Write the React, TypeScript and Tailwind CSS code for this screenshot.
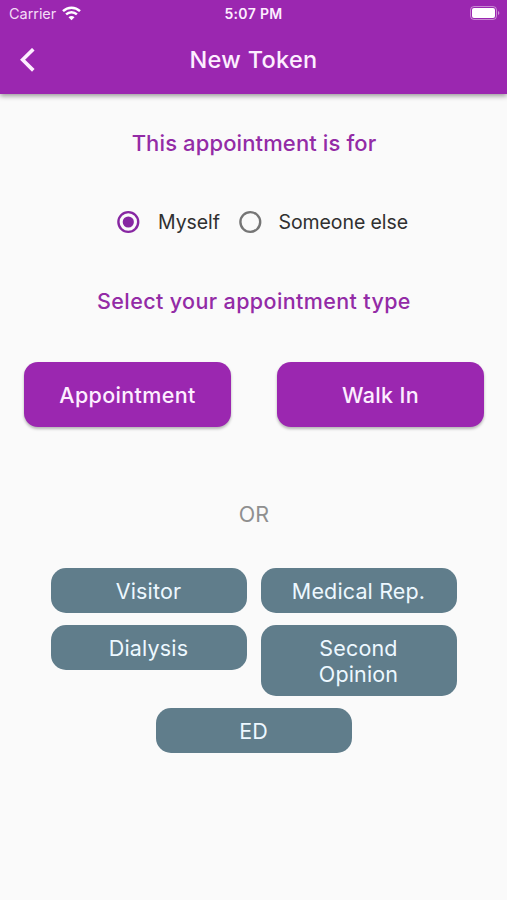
import { useState } from 'react';

const people = [
  { id: 'myself', label: 'Myself', text: 'ml-[18px] w-[61px]', gap: '' },
  { id: 'other', label: 'Someone else', text: 'ml-[17px] w-[130px]', gap: 'ml-[18.5px]' },
];

const mainTypes = ['Appointment', 'Walk In'];
const otherTypes = ['Visitor', 'Medical Rep.', 'Dialysis', 'Second Opinion', 'ED'];

function StatusBar() {
  return (
    <div className="grid h-[26px] grid-cols-3 items-center pr-[7px] pl-[9px] text-[14px] leading-none">
      <div className="flex items-center gap-[6px]">
        <span className="pt-[2px] text-[14.5px] tracking-[-0.05px] text-[#f3dcf6]">Carrier</span>
        <svg width="19" height="15" viewBox="0 0 19 15" fill="none" stroke="white" strokeWidth="2.5">
          <path d="M1 5.2C5.8 0.6 13.2 0.6 18 5.2" />
          <path d="M4.1 8.4C7.2 5.5 11.8 5.5 14.9 8.4" />
          <path d="M9.5 14.3L6.5 11.2C8.2 9.6 10.8 9.6 12.5 11.2Z" fill="white" stroke="none" />
        </svg>
      </div>
      <span className="pt-[2px] text-center text-[14px] font-semibold tracking-[0.35px] -indent-[2px]">5:07 PM</span>
      <svg className="justify-self-end" width="30" height="14" viewBox="0 0 30 14">
        <rect x="0.5" y="0.5" width="26" height="13" rx="3.5" fill="none" stroke="white" strokeOpacity="0.45" />
        <rect x="2" y="2" width="23" height="10" rx="2" fill="white" />
        <path d="M28 5C29.8 5.6 29.8 8.4 28 9Z" fill="white" fillOpacity="0.5" />
      </svg>
    </div>
  );
}

function Radio({ checked }: { checked: boolean }) {
  return (
    <svg
      className={checked ? 'text-[#8726a2]' : 'text-[#757575]'}
      width="24"
      height="24"
      viewBox="0 0 24 24"
      fill="none"
    >
      <circle cx="12.3" cy="12" r="9.9" stroke="currentColor" strokeWidth="2.4" />
      {checked && <circle cx="12.3" cy="12" r="5.6" fill="currentColor" />}
    </svg>
  );
}

export default function App() {
  const [person, setPerson] = useState('myself');

  return (
    <main className="h-[900px] w-[507px] overflow-hidden bg-[#fafafa] font-['Inter',sans-serif]">
      <header className="h-[94px] bg-[#9b27b0] text-[#fdeeff] shadow-[0_2px_5px_rgba(0,0,0,0.4)]">
        <StatusBar />
        <div className="grid h-[67px] grid-cols-[60px_1fr_60px] items-center">
          <button aria-label="Back" className="pl-[19px]">
            <svg width="17" height="24" viewBox="0 0 17 24" fill="none" stroke="currentColor" strokeWidth="3.6">
              <path d="M14.3 1.2L3.6 11.8L14.3 22.4" />
            </svg>
          </button>
          <h1 className="text-center text-[23.5px] font-medium tracking-[0.3px]">New Token</h1>
        </div>
      </header>

      <h2 className="mt-[35px] pl-px text-center text-[22px] leading-[28px] font-medium tracking-[0.12px] text-[#932ba6]">
        This appointment is for
      </h2>

      <div className="mt-[51px] flex h-[28px] items-center pl-[116px]">
        {people.map((p) => (
          <button key={p.id} onClick={() => setPerson(p.id)} className={`flex items-center ${p.gap}`}>
            <Radio checked={person === p.id} />
            <span
              className={`pt-[2px] text-left text-[19.5px] tracking-[-0.08px] whitespace-nowrap text-[#303030] ${p.text}`}
            >
              {p.label}
            </span>
          </button>
        ))}
      </div>

      <h2 className="mt-[51px] pl-px text-center text-[21.5px] leading-[28px] font-medium tracking-[0.38px] text-[#932ba6]">
        Select your appointment type
      </h2>

      <div className="mt-[47px] flex justify-between pr-[23px] pl-[24px]">
        {mainTypes.map((type) => (
          <button
            key={type}
            className="h-[65px] w-[207px] rounded-[14px] bg-[#9b27b0] pt-[2px] text-[21.5px] font-medium tracking-[0.35px] text-[#fdeeff] shadow-[0_2px_3px_rgba(0,0,0,0.28)]"
          >
            {type}
          </button>
        ))}
      </div>

      <p className="mt-[73px] pl-px text-center text-[21.5px] leading-[28px] text-[#8f8f8f]">OR</p>

      <div className="mt-[40px] flex flex-wrap items-start justify-center gap-x-[14px] gap-y-[12.3px] px-[40px]">
        {otherTypes.map((type) => (
          <button
            key={type}
            className="w-[196px] rounded-[15px] bg-[#607d8b] px-[28px] pt-[10.6px] pb-[8.6px] text-[21.5px] leading-[25.8px] tracking-[0.15px] text-[#edf8ff]"
          >
            {type}
          </button>
        ))}
      </div>
    </main>
  );
}
